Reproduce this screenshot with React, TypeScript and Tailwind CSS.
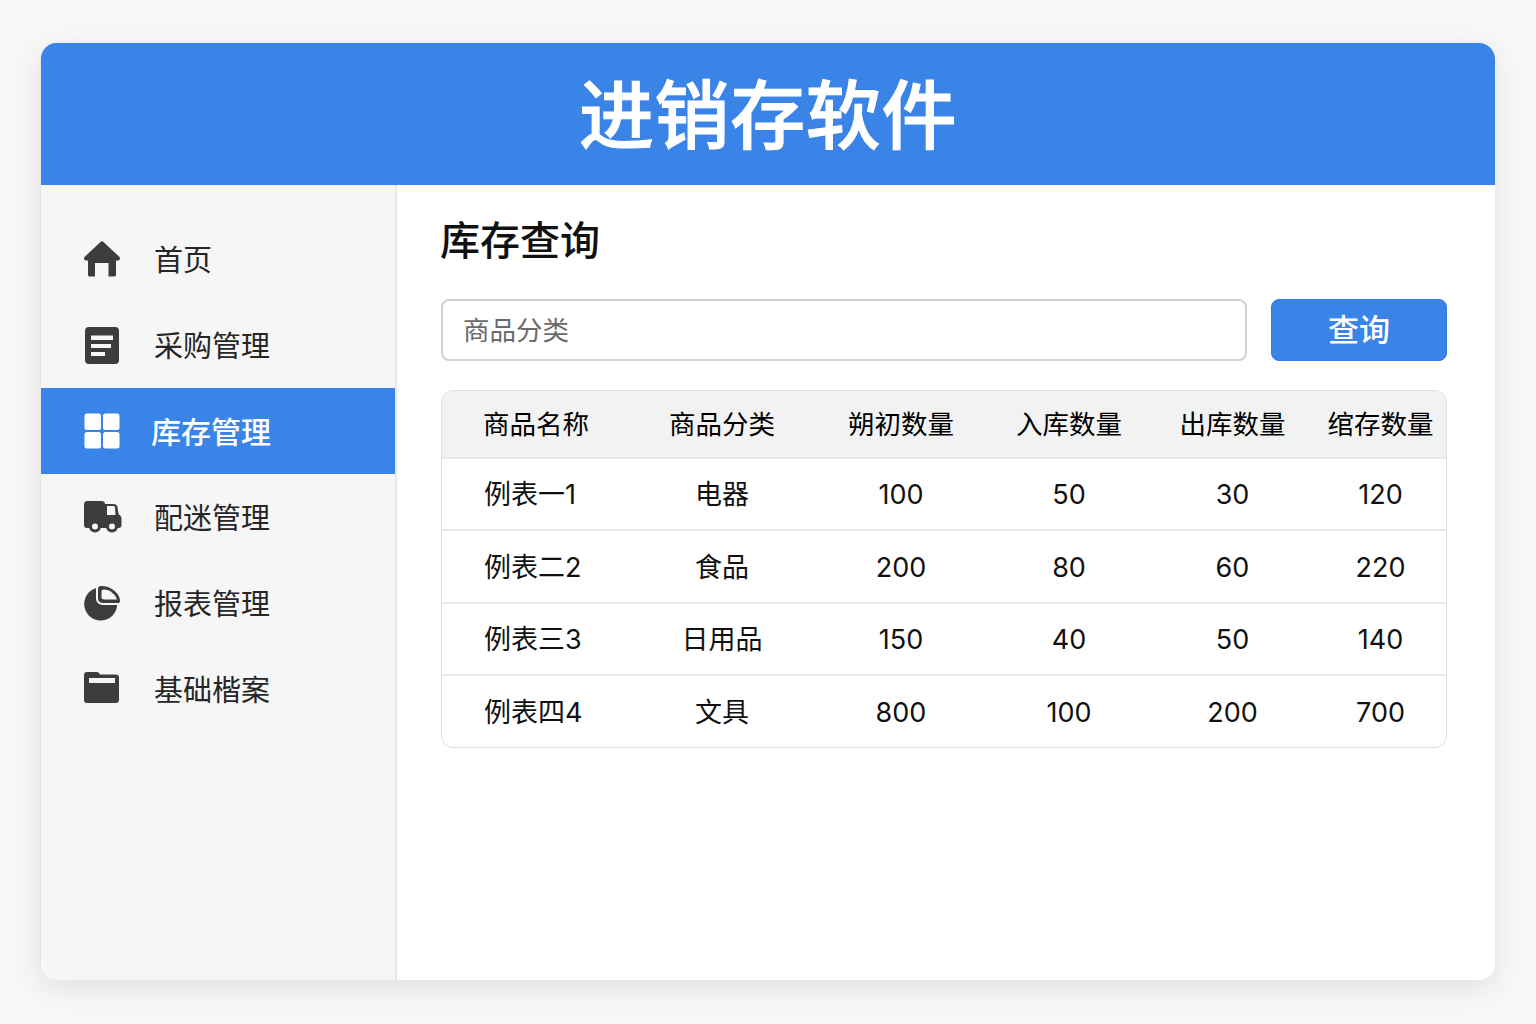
import React from "react";

const FONT = "font-['Inter','Noto_Sans_CJK_SC',sans-serif]";

const HomeIcon = () => (
  <svg viewBox="0 0 36 36" className="w-9 h-9" fill="#3d3d3d">
    <path d="M16.500 1 C17.500 0 18.500 0 19.500 1 L35.500 16 C36.500 17.500 36 19.500 34 19.500 L32 19.500 L32 33.500 C32 35 31.500 35.500 30 35.500 L24.500 35.500 L24.500 22 L11 22 L11 35.500 L6 35.500 C4.500 35.500 4 35 4 33.500 L4 19.500 L2 19.500 C0 19.500 -0.500 17.500 0.500 16 Z" />
  </svg>
);

const DocIcon = () => (
  <svg viewBox="0 0 36 37" className="w-9 h-[37px]">
    <rect x="1" y="0" width="34" height="37" rx="4" fill="#3d3d3d" />
    <rect x="7" y="8.500" width="22" height="4.500" fill="#f6f6f6" />
    <rect x="7" y="17" width="20" height="4" fill="#f6f6f6" />
    <rect x="7" y="25" width="14" height="4" fill="#f6f6f6" />
  </svg>
);

const GridIcon = () => (
  <svg viewBox="0 0 36 36" className="w-9 h-9" fill="#ffffff">
    <rect x="0.500" y="0.500" width="16.500" height="16.500" rx="2.500" />
    <rect x="19" y="0.500" width="16.500" height="16.500" rx="2.500" />
    <rect x="0.500" y="19" width="16.500" height="16.500" rx="2.500" />
    <rect x="19" y="19" width="16.500" height="16.500" rx="2.500" />
  </svg>
);

const TruckIcon = () => (
  <svg viewBox="0 0 38 32" className="w-[38px] h-8">
    <path d="M4 0 H17 C20 0 21 1 21 3 H29 C32 3 33 4 33.500 6 L34.500 13 L36.500 15 C37.500 16 37.500 17 37.500 18 V24 C37.500 26 36.500 27 35 27 H3 C1 27 0 26 0 24 V4 C0 1 1 0 4 0 Z" fill="#3d3d3d" />
    <path d="M23 5 H29 C30.500 5 31 5.500 31 7 L31.500 14 H23 Z" fill="#f6f6f6" />
    <circle cx="11" cy="25.500" r="6" fill="#3d3d3d" />
    <circle cx="11" cy="25.500" r="3" fill="#f6f6f6" />
    <circle cx="28" cy="25.500" r="6" fill="#3d3d3d" />
    <circle cx="28" cy="25.500" r="3" fill="#f6f6f6" />
  </svg>
);

const PieIcon = () => (
  <svg viewBox="0 0 36 35" className="w-9 h-[35px]">
    <circle cx="16.700" cy="18" r="16.500" fill="#3d3d3d" />
    <path d="M17 0 C28 0 36 8 36 15 C36 16.500 35 17 34 17 H19 C16 17 14 15 14 13 V3 C14 1 15 0 17 0 Z" fill="#3d3d3d" stroke="#f6f6f6" strokeWidth="4" />
    <path d="M17 0 C28 0 36 8 36 15 C36 16.500 35 17 34 17 H19 C16 17 14 15 14 13 V3 C14 1 15 0 17 0 Z" fill="#3d3d3d" />
    <path d="M19.500 3.500 C26 3.500 31.500 8.500 33 13.500 H20 C18.800 13.500 17.500 12.500 17.500 11.500 V5.500 C17.500 4.300 18.300 3.500 19.500 3.500 Z" fill="#f6f6f6" />
  </svg>
);

const FolderIcon = () => (
  <svg viewBox="0 0 36 31" className="w-9 h-[31px] mb-[3px]">
    <path d="M3 0 H13 C14.500 0 15 1 16 2.500 H32 C34 2.500 35 3.500 35 5.500 V28 C35 30 34 31 32 31 H3 C1 31 0 30 0 28 V3 C0 1 1 0 3 0 Z" fill="#3d3d3d" />
    <rect x="5" y="6" width="26" height="5" fill="#f6f6f6" />
  </svg>
);

const navItems = [
  { label: "首页", icon: <HomeIcon />, active: false },
  { label: "采购管理", icon: <DocIcon />, active: false },
  { label: "库存管理", icon: <GridIcon />, active: true },
  { label: "配迷管理", icon: <TruckIcon />, active: false },
  { label: "报表管理", icon: <PieIcon />, active: false },
  { label: "基础楷案", icon: <FolderIcon />, active: false },
];

const headers = ["商品名称", "商品分类", "朔初数量", "入库数量", "出库数量", "绾存数量"];

const rows = [
  ["例表一1", "电器", "100", "50", "30", "120"],
  ["例表二2", "食品", "200", "80", "60", "220"],
  ["例表三3", "日用品", "150", "40", "50", "140"],
  ["例表四4", "文具", "800", "100", "200", "700"],
];

const App: React.FC = () => {
  return (
    <div className={`min-h-screen bg-[#f7f7f8] pt-[43px] pl-10 pr-[41px] ${FONT}`}>
      <div className="h-[937px] flex flex-col rounded-2xl overflow-hidden bg-white border-l border-[#e6e6e6] shadow-[0_8px_28px_rgba(0,0,0,0.09)]">
        <header className="h-[142px] shrink-0 bg-[#3a84e8] flex items-center justify-center">
          <h1 className="text-[75px] leading-none font-medium text-white tracking-[0.6px] pt-[2px] [-webkit-text-stroke:1px_white]">进销存软件</h1>
        </header>

        <div className="flex-1 flex min-h-0">
          <aside className="w-[355.500px] shrink-0 bg-[#f6f6f6] border-r-2 border-[#e8e8e8] pt-[31px]">
            {navItems.map((item) => (
              <div
                key={item.label}
                className={`h-[86px] flex items-center ${item.active ? "bg-[#3a84e8] text-white font-medium" : "text-[#262626]"}`}
              >
                <div className="w-[113px] pl-[43px] shrink-0 flex items-center">{item.icon}</div>
                <span className={`leading-none ${item.active ? "text-[30px] -ml-[3px] mt-px" : "text-[29px] mt-[2px]"}`}>
                  {item.label}
                </span>
              </div>
            ))}
          </aside>

          <main className="flex-1 pl-[43.500px] pr-[48px] pt-[32px]">
            <h2 className="text-[40px] leading-[48px] font-medium text-[#111111]">库存查询</h2>

            <div className="mt-[34px] flex gap-6 pl-px">
              <input
                readOnly
                placeholder="商品分类"
                className="flex-1 h-[62px] rounded-lg border-2 border-[#d2d2d2] bg-white px-[20px] text-[26.500px] outline-none placeholder:text-[#6b6b6b]"
              />
              <button className="w-[176px] h-[62px] rounded-lg bg-[#3a84e8] border border-[#2f7ae0] text-white text-[31px] font-medium">
                查询
              </button>
            </div>

            <div className="mt-[29px] ml-px rounded-xl border border-[#e0e0e0] overflow-hidden">
              <table className="w-full table-fixed border-collapse text-center">
                <colgroup>
                  <col className="w-[188px]" />
                  <col className="w-[184px]" />
                  <col className="w-[174px]" />
                  <col className="w-[162px]" />
                  <col className="w-[165px]" />
                  <col />
                </colgroup>
                <thead>
                  <tr className="h-[67px] bg-[#f2f2f2] border-b-2 border-[#e6e6e6]">
                    {headers.map((h) => (
                      <th key={h} className="text-[26.500px] font-normal text-black p-0 pt-[2px]">
                        {h}
                      </th>
                    ))}
                  </tr>
                </thead>
                <tbody>
                  {rows.map((row, i) => (
                    <tr
                      key={row[0]}
                      className={`h-[72.250px] ${i < rows.length - 1 ? "border-b-2 border-[#e8e8e8]" : ""}`}
                    >
                      {row.map((cell, j) => (
                        <td
                          key={j}
                          className={`text-[27px] font-normal text-[#111111] p-0 pt-[3px] ${j === 0 ? "text-left pl-[42px]" : ""}`}
                        >
                          {cell}
                        </td>
                      ))}
                    </tr>
                  ))}
                </tbody>
              </table>
            </div>
          </main>
        </div>
      </div>
    </div>
  );
};

export default App;
